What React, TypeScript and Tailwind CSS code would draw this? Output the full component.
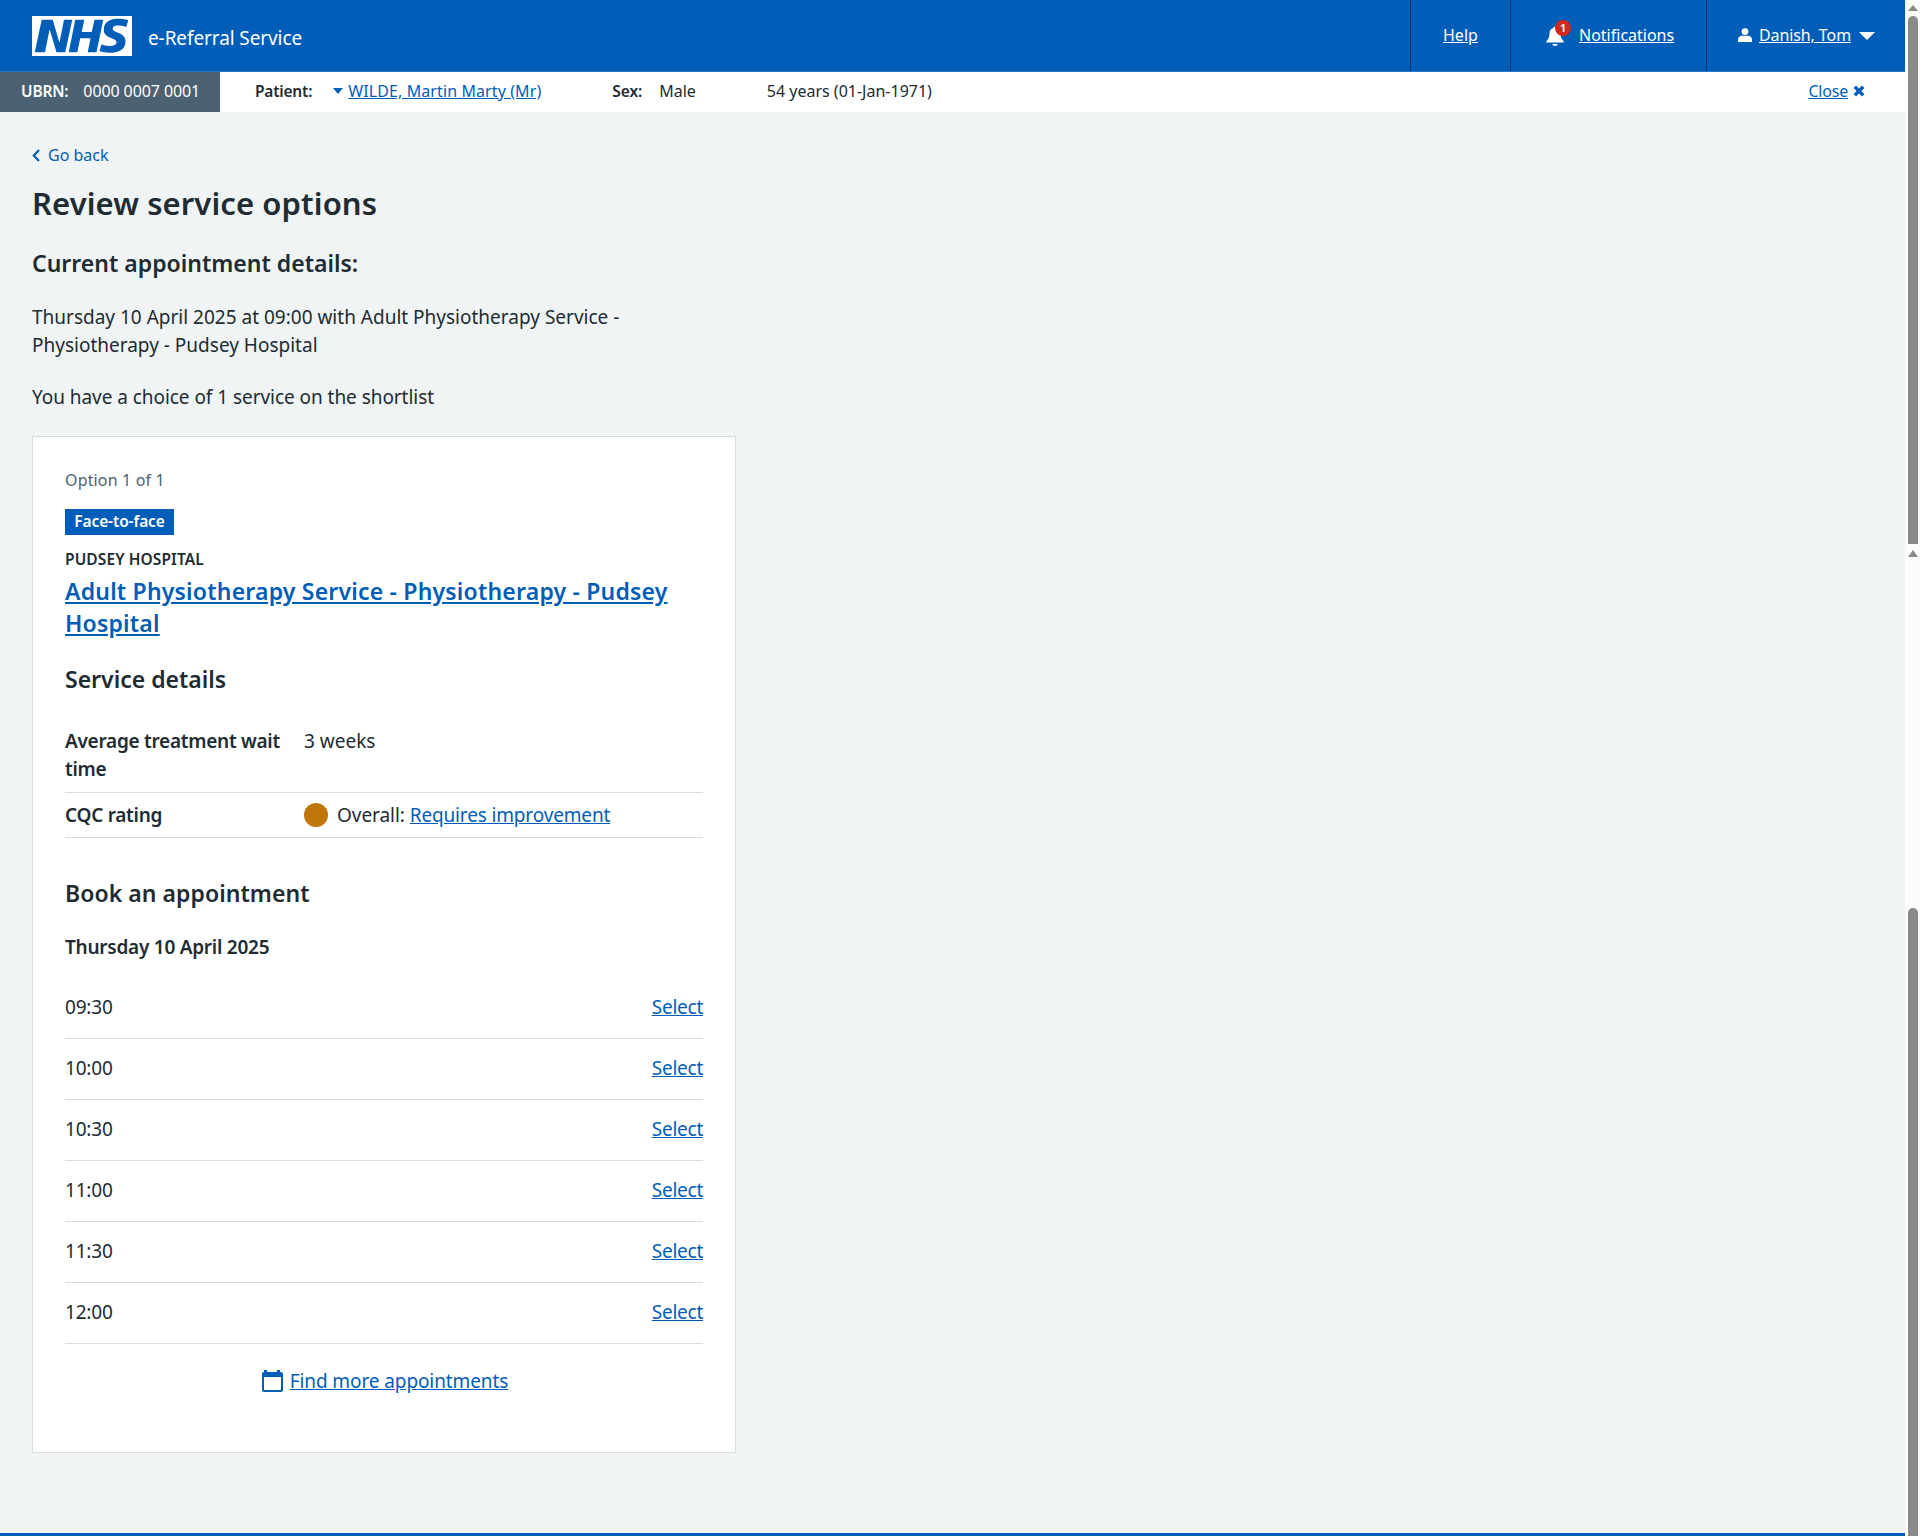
const slots = ["09:30", "10:00", "10:30", "11:00", "11:30", "12:00"];

function NhsLogo() {
	return (
		<svg viewBox="0 0 40 16" className="w-[100px] h-[40px] shrink-0">
			<path fill="#fff" d="M0 0h40v16H0z" />
			<path
				fill="#005eb8"
				d="M3.9 1.5h4.4l2.6 9h.1l1.8-9h3.3l-2.8 13H9.8l-2.7-9h-.1l-1.8 9H1.1M17.3 1.5h3.6l-1 4.9h4L25 1.5h3.5l-2.7 13h-3.5l1.1-5.6h-4.1l-1.2 5.6h-3.4M37.7 4.4c-.7-.3-1.6-.6-2.9-.6-1.4 0-2.5.2-2.5 1.3 0 1.8 5.1 1.2 5.1 5.1 0 3.6-3.3 4.5-6.4 4.5-1.3 0-2.9-.3-4-.7l.8-2.7c.7.4 2.1.7 3.2.7s2.8-.2 2.8-1.5c0-2.1-5.1-1.3-5.1-5 0-3.4 2.9-4.4 5.8-4.4 1.6 0 3.1.2 4 .6"
			/>
		</svg>
	);
}

function Bell() {
	return (
		<div className="relative w-[18px] h-[20px]">
			<svg viewBox="0 0 18 20" className="w-[18px] h-[20px]">
				<path
					fill="#fff"
					d="M9 0.5c-1 0-1.6.8-1.6 1.6C4.8 2.8 3.4 5 3.4 7.8c0 3.6-1 5.6-3.2 7.6v1.1h17.6v-1.1c-2.2-2-3.2-4-3.2-7.6 0-2.8-1.4-5-4-5.7C10.600 1.300 10 .5 9 .5z"
				/>
				<path fill="#fff" d="M6.4 18h5.200c0 1.200-1.200 2-2.600 2s-2.600-.8-2.600-2z" />
			</svg>
			<span className="absolute left-[9px] top-[-6px] w-[16px] h-[16px] rounded-full bg-[#d5281b] text-white text-[10px] leading-[16px] font-bold text-center">
				1
			</span>
		</div>
	);
}

function Scrollbar() {
	return (
		<div className="w-[15px] shrink-0 h-[1536px] bg-[#fcfcfc] flex flex-col items-center pl-[1px]">
			<svg viewBox="0 0 10 6" className="w-[10px] h-[6px] mt-[5px]">
				<path fill="#8a8a8a" d="M5 0l5 6H0z" />
			</svg>
			<div className="w-[10px] h-[528px] mt-[5px] bg-[#8a8a8a] rounded-t-[5px]" />
			<svg viewBox="0 0 10 7" className="w-[10px] h-[7px] mt-[6px]">
				<path fill="#8a8a8a" d="M5 0l5 7H0z" />
			</svg>
			<div className="w-[10px] flex-1 mt-[351px] bg-[#8a8a8a] rounded-t-[5px]" />
		</div>
	);
}

export default function App() {
	return (
		<div className="flex h-[1536px] overflow-hidden bg-[#f0f4f5] text-[#212b32] font-['Noto_Sans',sans-serif] text-[19px] leading-[28px]">
			<div className="flex-1 flex flex-col min-w-0">
				{/* Header */}
				<header className="h-[72px] bg-[#005eb8] border-b border-[#2a78c4] flex items-stretch text-white text-[16px]">
					<div className="flex items-center pl-[32px] flex-1">
						<NhsLogo />
						<span className="ml-[16px] mt-[4px] text-[19px] tracking-[-0.1px]">e-Referral Service</span>
					</div>
					<nav className="flex items-stretch">
						<div className="w-[100px] pl-[32px] border-l border-[#00366e] pt-[21px]">
							<a className="underline">Help</a>
						</div>
						<div className="w-[196px] pl-[35px] border-l border-[#00366e] flex items-start pt-[21px]">
							<div className="mt-[5px]">
								<Bell />
							</div>
							<a className="underline ml-[15px]">Notifications</a>
						</div>
						<div className="w-[199px] pl-[31px] border-l border-[#00366e] flex items-start pt-[21px]">
							<svg viewBox="0 0 14 14" className="w-[14px] h-[14px] mt-[7px]">
								<circle cx="7" cy="3.600" r="3.400" fill="#fff" />
								<path fill="#fff" d="M0 14v-2.500C0 9 2 7.800 4 7.800h6c2 0 4 1.200 4 3.700V14z" />
							</svg>
							<a className="underline ml-[7px] tracking-[-0.1px]">Danish, Tom</a>
							<svg viewBox="0 0 16 8" className="w-[16px] h-[8px] mt-[11px] ml-[8px]">
								<path fill="#fff" d="M0 0h16l-8 8z" />
							</svg>
						</div>
					</nav>
				</header>

				{/* Patient banner */}
				<div className="h-[40px] bg-white flex items-center text-[16px] pb-[2px]">
					<div className="w-[220px] h-[40px] mb-[-2px] bg-[#4c6272] text-white flex items-center pl-[21px] pb-[2px]">
						<b className="font-semibold text-[15.5px] tracking-[-0.2px]">UBRN:</b>
						<span className="ml-[15px] tracking-[-0.1px]">0000 0007 0001</span>
					</div>
					<b className="font-semibold text-[15.5px] tracking-[-0.2px] ml-[35px]">Patient:</b>
					<svg viewBox="0 0 10 6" className="w-[10px] h-[6px] ml-[21px]">
						<path fill="#005eb8" d="M0 0h10L5 6z" />
					</svg>
					<a className="underline text-[#005eb8] ml-[5px] tracking-[0.1px]">WILDE, Martin Marty (Mr)</a>
					<b className="font-semibold text-[15.5px] tracking-[-0.1px] ml-[71px]">Sex:</b>
					<span className="ml-[17px]">Male</span>
					<span className="ml-[71px]">54 years (01-Jan-1971)</span>
					<a className="underline text-[#005eb8] ml-auto tracking-[-0.2px]">Close</a>
					<svg viewBox="0 0 12 12" className="w-[12px] h-[12px] ml-[5px] mr-[40px]">
						<path stroke="#005eb8" strokeWidth="3.400" d="M1.800 1.800l8.400 8.400M10.200 1.800l-8.400 8.400" />
					</svg>
				</div>

				{/* Page */}
				<main className="flex-1 pl-[32px]">
					<a className="mt-[31px] flex items-center leading-[24px] text-[16px] text-[#005eb8]">
						<svg viewBox="0 0 8 13" className="w-[8px] h-[13px]">
							<path fill="none" stroke="#005eb8" strokeWidth="2.200" d="M7 1L1.800 6.500 7 12" />
						</svg>
						<span className="ml-[8px]">Go back</span>
					</a>
					<h1 className="mt-[16px] text-[31px] tracking-[0.1px] leading-[40px] font-semibold">Review service options</h1>
					<h2 className="mt-[24px] text-[23px] leading-[32px] font-semibold">Current appointment details:</h2>
					<p className="mt-[24px] w-[620px]">
						Thursday 10 April 2025 at 09:00 with Adult Physiotherapy Service - Physiotherapy - Pudsey Hospital
					</p>
					<p className="mt-[24px] tracking-[-0.05px]">You have a choice of 1 service on the shortlist</p>

					{/* Option card */}
					<section className="mt-[25px] w-[704px] bg-white border border-[#d8dde0] pl-[32px] pr-[32px] pt-[31px] pb-[57px]">
						<div className="text-[16px] leading-[24px] tracking-[0.15px] text-[#4c6272]">Option 1 of 1</div>
						<div className="mt-[17px] w-[109px] h-[26px] bg-[#005eb8] text-white text-[15.5px] leading-[24px] tracking-[-0.1px] font-semibold text-center">
							Face-to-face
						</div>
						<div className="mt-[12px] text-[15.5px] leading-[24px] tracking-[0.1px] font-semibold">PUDSEY HOSPITAL</div>
						<a className="mt-[4px] block text-[23px] leading-[32px] tracking-[0.2px] font-semibold text-[#005eb8] underline">
							Adult Physiotherapy Service - Physiotherapy - Pudsey Hospital
						</a>
						<h3 className="mt-[24px] text-[23px] leading-[32px] font-semibold">Service details</h3>
						<div className="mt-[32px] grid grid-cols-[239px_1fr]">
							<b className="font-semibold tracking-[-0.27px] pb-[9px] border-b border-[#d8dde0] pr-[10px]">Average treatment wait time</b>
							<span className="pb-[9px] border-b border-[#d8dde0]">3 weeks</span>
							<b className="font-semibold tracking-[-0.27px] h-[45px] pb-[1px] flex items-center border-b border-[#d8dde0]">CQC rating</b>
							<span className="h-[45px] flex items-center border-b border-[#d8dde0]">
								<span className="w-[24px] h-[24px] rounded-full bg-[#c0770a] mr-[9px]" />
								<span className="mb-[1px] tracking-[-0.05px]">
									Overall: <a className="underline text-[#005eb8] tracking-[-0.15px]">Requires improvement</a>
								</span>
							</span>
						</div>
						<h3 className="mt-[39px] text-[23px] leading-[32px] tracking-[0.05px] font-semibold">Book an appointment</h3>
						<div className="mt-[24px] font-semibold tracking-[-0.25px]">Thursday 10 April 2025</div>
						<div className="mt-[17px] flex flex-col">
							{slots.map((slot) => (
								<div key={slot} className="h-[61px] pb-[2px] flex items-center justify-between border-b border-[#d8dde0]">
									<span className="tracking-[-0.2px]">{slot}</span>
									<a className="underline text-[#005eb8] tracking-[-0.25px]">Select</a>
								</div>
							))}
						</div>
						<div className="mt-[23px] flex justify-center items-center pl-[2px]">
							<svg viewBox="0 0 21 22" className="w-[21px] h-[22px]">
								<path
									fill="#005eb8"
									d="M2 0h3v2h10V0h3v2h1c1.100 0 2 .9 2 2v16c0 1.100-.9 2-2 2H2c-1.100 0-2-.9-2-2V4c0-1.100.9-2 2-2zM2 7v13h17V7z"
								/>
							</svg>
							<a className="underline text-[#005eb8] ml-[7px] tracking-[-0.1px]">Find more appointments</a>
						</div>
					</section>
				</main>
				<div className="h-[3px] bg-[#005eb8]" />
			</div>
			<Scrollbar />
		</div>
	);
}
